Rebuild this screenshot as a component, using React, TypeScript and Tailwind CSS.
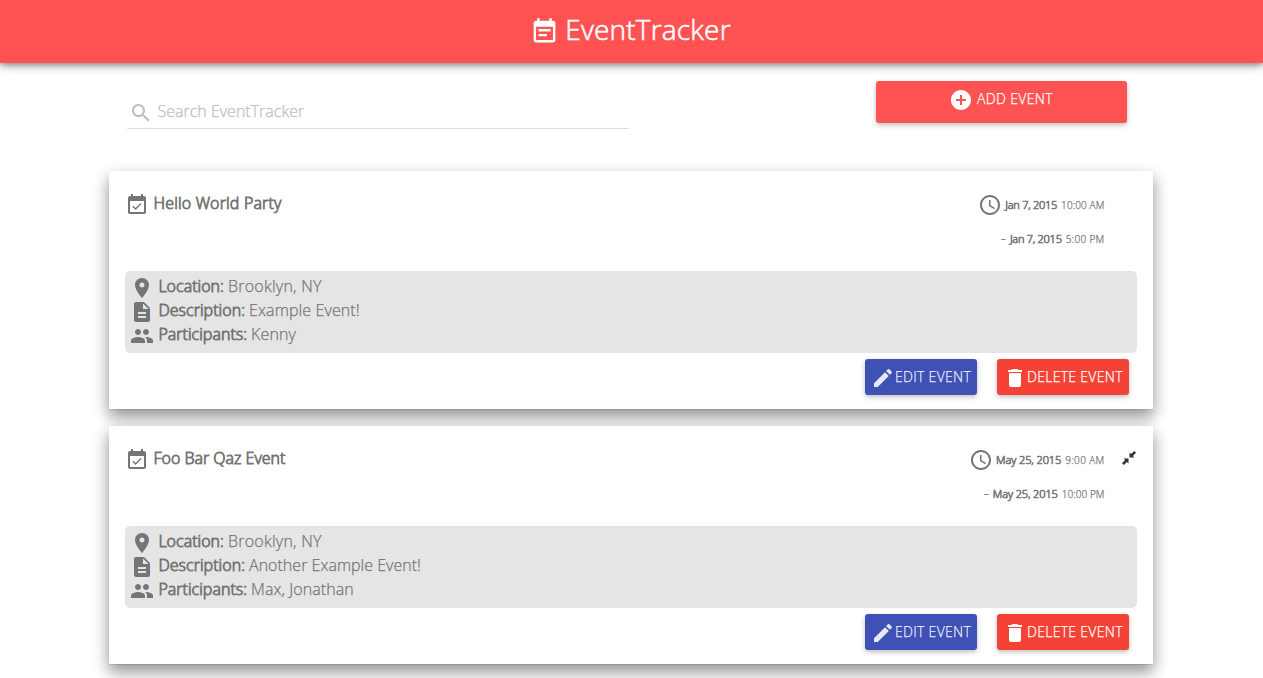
import type { ReactNode } from "react";

const icons = {
  note: "M17 10H7v2h10v-2zm2-7h-1V1h-2v2H8V1H6v2H5c-1.11 0-1.99.9-1.99 2L3 19c0 1.1.89 2 2 2h14c1.1 0 2-.9 2-2V5c0-1.1-.9-2-2-2zm0 16H5V8h14v11zm-5-5H7v2h7v-2z",
  search: "M15.5 14h-.79l-.28-.27C15.41 12.59 16 11.11 16 9.5 16 5.91 13.09 3 9.5 3S3 5.91 3 9.5 5.91 16 9.5 16c1.61 0 3.09-.59 4.23-1.57l.27.28v.79l5 4.99L20.49 19l-4.99-5zm-6 0C7.01 14 5 11.99 5 9.5S7.01 5 9.5 5 14 7.01 14 9.5 11.99 14 9.5 14z",
  add: "M12 2C6.48 2 2 6.48 2 12s4.48 10 10 10 10-4.48 10-10S17.52 2 12 2zm5 11h-4v4h-2v-4H7v-2h4V7h2v4h4v2z",
  available: "M16.53 11.06L15.47 10l-4.88 4.88-2.12-2.12-1.06 1.06L10.59 17l5.94-5.94zM19 3h-1V1h-2v2H8V1H6v2H5c-1.11 0-1.99.9-1.99 2L3 19c0 1.1.89 2 2 2h14c1.1 0 2-.9 2-2V5c0-1.1-.9-2-2-2zm0 16H5V8h14v11z",
  clock: "M11.99 2C6.47 2 2 6.48 2 12s4.47 10 9.99 10C17.52 22 22 17.52 22 12S17.52 2 11.99 2zM12 20c-4.42 0-8-3.58-8-8s3.58-8 8-8 8 3.58 8 8-3.58 8-8 8zm.5-13H11v6l5.25 3.15.75-1.23-4.5-2.67z",
  place: "M12 2C8.13 2 5 5.13 5 9c0 5.25 7 13 7 13s7-7.75 7-13c0-3.87-3.13-7-7-7zm0 9.5c-1.38 0-2.5-1.12-2.5-2.5s1.12-2.5 2.5-2.5 2.5 1.12 2.5 2.5-1.12 2.5-2.5 2.5z",
  description: "M14 2H6c-1.1 0-1.99.9-1.99 2L4 20c0 1.1.89 2 1.99 2H18c1.1 0 2-.9 2-2V8l-6-6zm2 16H8v-2h8v2zm0-4H8v-2h8v2zm-3-5V3.5L18.5 9H13z",
  people: "M16 11c1.66 0 2.99-1.34 2.99-3S17.66 5 16 5c-1.66 0-3 1.34-3 3s1.34 3 3 3zm-8 0c1.66 0 2.99-1.34 2.99-3S9.66 5 8 5C6.34 5 5 6.34 5 8s1.34 3 3 3zm0 2c-2.33 0-7 1.17-7 3.5V19h14v-2.5c0-2.33-4.67-3.5-7-3.5zm8 0c-.29 0-.62.02-.97.05 1.16.84 1.97 1.97 1.97 3.45V19h6v-2.5c0-2.33-4.67-3.5-7-3.5z",
  edit: "M3 17.25V21h3.75L17.81 9.94l-3.75-3.75L3 17.25zM20.71 7.04c.39-.39.39-1.02 0-1.41l-2.34-2.34c-.39-.39-1.02-.39-1.41 0l-1.83 1.83 3.75 3.75 1.83-1.83z",
  trash: "M6 19c0 1.1.9 2 2 2h8c1.1 0 2-.9 2-2V7H6v12zM19 4h-3.5l-1-1h-5l-1 1H5v2h14V4z",
};

function Icon({ name, className = "size-6" }: { name: keyof typeof icons; className?: string }) {
  return (
    <svg viewBox="0 0 24 24" fill="currentColor" className={`shrink-0 ${className}`}>
      <path d={icons[name]} />
    </svg>
  );
}

function CollapseIcon() {
  return (
    <svg viewBox="0 0 14 14" className="h-3.5 w-3.5 text-[#333]" fill="currentColor">
      <path d="M7.5 1.5 9.1 3.1 12.2 0 14 1.8 10.9 4.9 12.5 6.5h-5zM1.5 7.5h5v5L4.9 10.9 1.8 14 0 12.2l3.1-3.1z" />
    </svg>
  );
}

type Part = { text: string; tracking: string };
type EventItem = {
  title: Part;
  start: { date: Part; time: Part };
  end: { date: Part; time: Part };
  place: Part;
  description: Part;
  participants: Part;
  collapsible: boolean;
};

const events: EventItem[] = [
  {
    title: { text: "Hello World Party", tracking: "tracking-[0.18px]" },
    start: { date: { text: "Jan 7, 2015", tracking: "tracking-[-0.25px]" }, time: { text: "10:00 AM", tracking: "tracking-[0.12px]" } },
    end: { date: { text: "Jan 7, 2015", tracking: "tracking-[-0.25px]" }, time: { text: "5:00 PM", tracking: "tracking-[0.32px]" } },
    place: { text: "Brooklyn, NY", tracking: "tracking-[0.25px]" },
    description: { text: "Example Event!", tracking: "tracking-[0.12px]" },
    participants: { text: "Kenny", tracking: "tracking-[0.1px]" },
    collapsible: false,
  },
  {
    title: { text: "Foo Bar Qaz Event", tracking: "tracking-[0px]" },
    start: { date: { text: "May 25, 2015", tracking: "tracking-[-0.07px]" }, time: { text: "9:00 AM", tracking: "tracking-[0.35px]" } },
    end: { date: { text: "May 25, 2015", tracking: "tracking-[-0.1px]" }, time: { text: "10:00 PM", tracking: "tracking-[0.05px]" } },
    place: { text: "Brooklyn, NY", tracking: "tracking-[0.25px]" },
    description: { text: "Another Example Event!", tracking: "tracking-[0.02px]" },
    participants: { text: "Max, Jonathan", tracking: "tracking-[0.06px]" },
    collapsible: true,
  },
];

const bold = "[-webkit-text-stroke:0.85px_currentColor]";

function DateLine({ lead, date, time }: { lead: ReactNode; date: Part; time: Part }) {
  return (
    <div className="flex h-6 items-center justify-end whitespace-nowrap text-[11px]">
      {lead}
      <span className={`[-webkit-text-stroke:0.7px_currentColor] ${date.tracking}`}>{date.text}</span>
      <span className={`ml-1 text-[10px] ${time.tracking}`}>{time.text}</span>
    </div>
  );
}

function Detail({ icon, label, tracking, value }: { icon: keyof typeof icons; label: string; tracking: string; value: Part }) {
  return (
    <div className="flex h-6 whitespace-nowrap leading-6">
      <Icon name={icon} />
      <span className={`-mt-0.5 ml-[4.4px] ${bold} ${tracking}`}>{label}</span>
      <span className={`-mt-0.5 ml-1 ${value.tracking}`}>{value.text}</span>
    </div>
  );
}

const buttonShadow = "shadow-[0_2px_5px_0_rgba(0,0,0,0.26)]";

function EventCard({ event }: { event: EventItem }) {
  return (
    <article className="h-[238px] bg-white px-4 pt-[22px] shadow-[0_1px_0_0_rgba(0,0,0,0.08),0_8px_14px_0_rgba(0,0,0,0.33),0_6px_18px_0_rgba(0,0,0,0.14)]">
      <div className="flex h-[78px]">
        <Icon name="available" />
        <h2 className={`ml-[4.5px] h-6 whitespace-nowrap leading-[21px] ${bold} ${event.title.tracking}`}>{event.title.text}</h2>
        <div className="ml-auto flex flex-col gap-2.5">
          <DateLine lead={<Icon name="clock" className="mr-[3px] size-6" />} {...event.start} />
          <DateLine lead={<span className="mr-1 pb-1 text-[15px]">-</span>} {...event.end} />
        </div>
        <div className="flex w-[32.5px] justify-end pr-px pt-[3px]">{event.collapsible && <CollapseIcon />}</div>
      </div>
      <div className="h-[82px] rounded-[5px] bg-[#e5e5e5] pl-[5px] pt-[5px]">
        <Detail icon="place" label="Location:" tracking="tracking-[0.03px]" value={event.place} />
        <Detail icon="description" label="Description:" tracking="tracking-[0.04px]" value={event.description} />
        <Detail icon="people" label="Participants:" tracking="tracking-[0.03px]" value={event.participants} />
      </div>
      <div className="mr-2 mt-1.5 flex justify-end gap-5 text-sm">
        <button className={`flex h-9 w-28 items-center whitespace-nowrap rounded-[3px] bg-[#3f51b5] pl-1.5 text-white/87 ${buttonShadow}`}>
          <Icon name="edit" className="mt-0.5 size-6" />
          <span className="tracking-[0.3px]">EDIT EVENT</span>
        </button>
        <button className={`flex h-9 w-33 items-center whitespace-nowrap rounded-[3px] bg-[#f44336] pl-1.5 text-white ${buttonShadow}`}>
          <Icon name="trash" className="mt-0.5 size-6" />
          <span className="tracking-[0.3px]">DELETE EVENT</span>
        </button>
      </div>
    </article>
  );
}

export default function App() {
  return (
    <div className="h-[678px] overflow-hidden bg-white font-['Open_Sans',sans-serif] text-base font-light text-[#757575] [-webkit-text-stroke:0.25px_currentColor]">
      <header className="relative flex h-[63px] justify-center bg-[#ff5252] pr-0.5 text-white shadow-[0_2px_10px_0_rgba(0,0,0,0.4),0_2px_4px_0_rgba(0,0,0,0.2)]">
        <Icon name="note" className="mt-[17px] size-[29px]" />
        <h1 className="ml-1.5 mt-2 whitespace-nowrap text-[28px] leading-[42px] tracking-[0.2px] [-webkit-text-stroke:0.6px_currentColor]">EventTracker</h1>
      </header>
      <div className="flex h-[108px] justify-between pl-[127px] pr-[136px] pt-[18px]">
        <label className="flex h-12 w-[502px] border-b border-[#e0e0e0] pl-0.5 pt-5 text-[#bdbdbd]">
          <Icon name="search" />
          <span className="ml-[4.5px] whitespace-nowrap leading-[21px] tracking-[0px]">Search EventTracker</span>
        </label>
        <button className={`flex h-[42px] w-[251px] justify-center rounded-[3px] bg-[#ff5252] pr-px pt-[7px] text-sm text-white ${buttonShadow}`}>
          <Icon name="add" />
          <span className="ml-1 whitespace-nowrap leading-[22px] tracking-[0.35px]">ADD EVENT</span>
        </button>
      </div>
      <main className="flex flex-col gap-[17px] pl-[109px] pr-[110px]">
        {events.map((event) => (
          <EventCard key={event.title.text} event={event} />
        ))}
      </main>
    </div>
  );
}
